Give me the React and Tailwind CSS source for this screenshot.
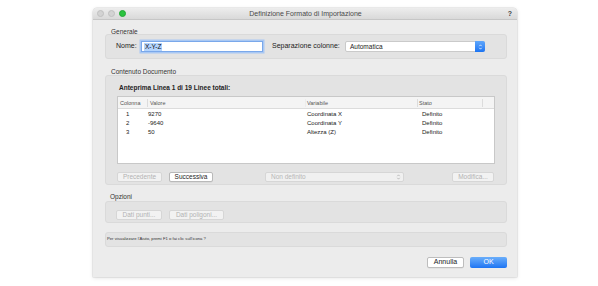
import React from "react";

const Updown = ({ color = "#fff", className = "" }) => (
  <svg viewBox="0 0 6 10" className={className}>
    <path d="M1.5 4 L3 2.3 L4.5 4" fill="none" stroke={color} strokeWidth="0.9" />
    <path d="M1.5 6 L3 7.7 L4.5 6" fill="none" stroke={color} strokeWidth="0.9" />
  </svg>
);

const Btn = ({ label, disabled, className = "" }) => (
  <div
    className={`h-[10px] flex items-center justify-center rounded-[2px] border text-[6.5px] leading-none ${
      disabled
        ? "bg-[#f2f2f2] border-[#d6d6d6] text-[#b3b3b3]"
        : "bg-white border-[#b9b9b9] text-[#1e1e1e] shadow-[0_0.5px_0_rgba(0,0,0,0.08)]"
    } ${className}`}
  >
    {label}
  </div>
);

const rows = [
  ["1", "9270", "Coordinata X", "Definito"],
  ["2", "-9640", "Coordinata Y", "Definito"],
  ["3", "50", "Altezza (Z)", "Definito"],
];

export default function App() {
  return (
    <div className="w-[598px] h-[286px] bg-white pl-[93px] pt-[8px] font-['Liberation_Sans',Arial,sans-serif] text-[#222]">
      <div className="w-[424px] h-[269px] bg-[#ececec] rounded-t-[4px] shadow-[0_0_0_0.5px_rgba(0,0,0,0.12),0_1px_4px_rgba(0,0,0,0.12)] flex flex-col">
        {/* Title bar */}
        <div className="h-[12px] flex items-center bg-gradient-to-b from-[#ededed] to-[#d9d9d9] border-b border-[#c6c6c6] rounded-t-[4px] px-[4px]">
          <div className="flex items-center gap-[4.5px] w-[40px]">
            <span className="w-[6.5px] h-[6.5px] rounded-full bg-[#d3d3d3] border-[0.5px] border-[#c0c0c0]"></span>
            <span className="w-[6.5px] h-[6.5px] rounded-full bg-[#d3d3d3] border-[0.5px] border-[#c0c0c0]"></span>
            <span className="w-[6.5px] h-[6.5px] rounded-full bg-[#2ac33f] border-[0.5px] border-[#22a735]"></span>
          </div>
          <div className="flex-1 text-center text-[7px] leading-none text-[#4a4a4a] pl-[1px]">
            Definizione Formato di Importazione
          </div>
          <div className="w-[40px] text-right text-[7px] font-bold leading-none text-[#444] pr-[1px]">?</div>
        </div>

        <div className="pl-[12px] pr-[10px] flex flex-col">
          {/* Generale */}
          <div className="mt-[7px] h-[7px] leading-[9px] text-[6.5px] pl-[6px] text-[#333]">Generale</div>
          <div className="h-[25px] bg-[#e3e3e3] border border-[#dadada] rounded-[3px] flex items-center pl-[10px]">
            <div className="w-[24px] text-[7px] text-[#222]">Nome:</div>
            <div className="w-[122px] h-[11px] ml-[1px] bg-white border border-[#7aa8ea] shadow-[0_0_0_1.5px_#a9c8f3] flex items-center pl-[2px]">
              <span className="bg-[#b3d4fd] text-[6.5px] leading-[8px] px-[1px] text-[#111]">X-Y-Z</span>
            </div>
            <div className="w-[73px] ml-[9px] text-[7px] text-[#222]">Separazione colonne:</div>
            <div className="w-[140px] h-[11px] bg-white border border-[#cacaca] rounded-[2px] flex items-center">
              <span className="flex-1 text-[6.5px] pl-[4px] text-[#222]">Automatica</span>
              <div className="w-[10px] h-[11px] -mr-[1px] rounded-r-[2px] bg-gradient-to-b from-[#5ea6fb] to-[#1b74f2] flex items-center justify-center">
                <Updown className="w-[5px] h-[8px]" />
              </div>
            </div>
          </div>

          {/* Contenuto Documento */}
          <div className="mt-[9px] h-[7px] leading-[8px] text-[6.5px] pl-[6px] text-[#333]">Contenuto Documento</div>
          <div className="h-[110px] bg-[#e3e3e3] border border-[#dadada] rounded-[3px] px-[11px] flex flex-col">
            <div className="mt-[8px] h-[8px] leading-[8px] text-[6.5px] font-bold pl-[2px] text-[#222]">
              Anteprima Linea 1 di 19 Linee totali:
            </div>
            <div className="mt-[4px] h-[68px] bg-white border border-[#c8c8c8] flex flex-col">
              <div className="h-[12px] bg-[#f4f4f4] border-b border-[#dcdcdc] grid grid-cols-[30px_158px_112px_65px_1fr] text-[5.5px] text-[#555] items-center">
                <div className="pl-[2px] border-r border-[#dcdcdc] h-[8px] leading-[8px]">Colonna</div>
                <div className="pl-[2px] h-[8px] leading-[8px] border-r border-[#ececec]">Valore</div>
                <div className="pl-[1px] border-r border-[#dcdcdc] h-[8px] leading-[8px]">Variabile</div>
                <div className="pl-[1px] border-r border-[#dcdcdc] h-[8px] leading-[8px]">Stato</div>
                <div></div>
              </div>
              <div className="pt-[0.5px]">
                {rows.map((r) => (
                  <div key={r[0]} className="h-[9px] grid grid-cols-[30px_158px_112px_65px_1fr] text-[6px] leading-[9px] text-[#222]">
                    <div className="pl-[8px]">{r[0]}</div>
                    <div>{r[1]}</div>
                    <div className="pl-[1px]">{r[2]}</div>
                    <div className="pl-[4px]">{r[3]}</div>
                    <div></div>
                  </div>
                ))}
              </div>
            </div>
            <div className="mt-[8px] flex items-center">
              <Btn label="Precedente" disabled className="w-[45px]" />
              <Btn label="Successiva" className="w-[44px] ml-[7px]" />
              <div className="w-[139px] h-[10px] ml-[52px] bg-[#f0f0f0] border border-[#d6d6d6] rounded-[2px] flex items-center">
                <span className="flex-1 pl-[5px] text-[6.5px] text-[#b7b7b7]">Non definito</span>
                <Updown color="#a9a9a9" className="w-[5px] h-[8px] mr-[2px]" />
              </div>
              <Btn label="Modifica..." disabled className="w-[42px] ml-[48px]" />
            </div>
          </div>

          {/* Opzioni */}
          <div className="mt-[9px] h-[7px] leading-[6px] text-[6.5px] pl-[5px] text-[#333]">Opzioni</div>
          <div className="h-[22px] bg-[#e3e3e3] border border-[#dadada] rounded-[3px] pl-[10px] flex items-center pt-[6px]">
            <Btn label="Dati punti..." disabled className="w-[46px] text-[6.5px]" />
            <Btn label="Dati poligoni..." disabled className="w-[55px] ml-[7px]" />
          </div>

          {/* Help bar */}
          <div className="mt-[9px] h-[15px] bg-[#e3e3e3] border border-[#dadada] rounded-[3px] flex items-center pl-[1px]">
            <span className="text-[4.2px] text-[#333] leading-none">
              Per visualizzare l'Aiuto, premi F1 o fai clic sull'icona ?
            </span>
          </div>

          {/* Footer buttons */}
          <div className="mt-[10px] flex justify-end items-center">
            <div className="w-[37px] h-[11px] bg-white border border-[#bdbdbd] rounded-[2px] flex items-center justify-center text-[7px] text-[#222] shadow-[0_0.5px_0_rgba(0,0,0,0.08)]">
              Annulla
            </div>
            <div className="w-[37px] h-[11px] ml-[6px] rounded-[2px] bg-gradient-to-b from-[#6aaefa] to-[#1b74f3] flex items-center justify-center text-[7px] text-white">
              OK
            </div>
          </div>
        </div>
      </div>
    </div>
  );
}
